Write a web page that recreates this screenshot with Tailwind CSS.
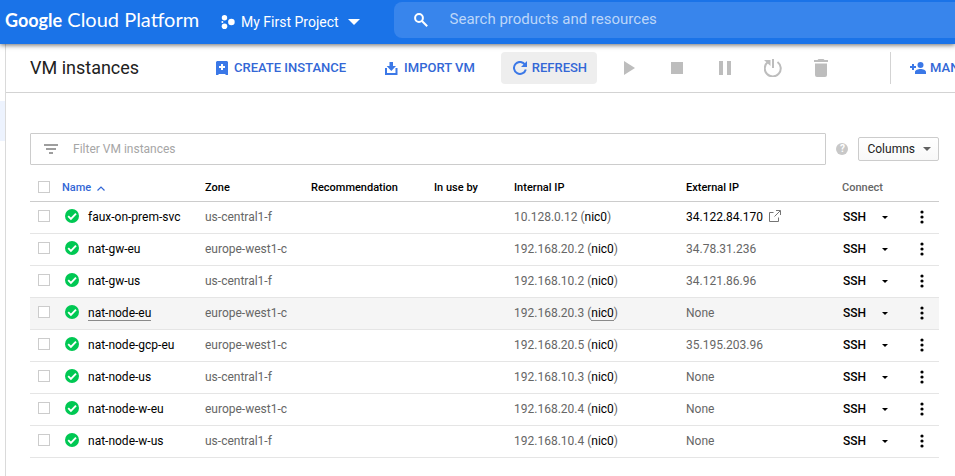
<!DOCTYPE html>
<html lang="en">
<head>
<meta charset="utf-8">
<meta name="viewport" content="width=device-width, initial-scale=1">
<title>VM instances</title>
<script src="https://cdn.jsdelivr.net/npm/@tailwindcss/browser@4"></script>
</head>
<body class="flex min-h-screen flex-col overflow-x-hidden bg-white font-[Roboto,sans-serif] text-xs text-[#212121]">

<svg class="hidden" aria-hidden="true">
  <symbol id="check" viewBox="0 0 14 14">
    <circle cx="7" cy="7" r="7" fill="#00c853"/>
    <path d="M3.2 7.2 5.9 9.900 11 4.600" fill="none" stroke="#fff" stroke-width="1.900"/>
  </symbol>
  <symbol id="dots" viewBox="0 0 4 14">
    <circle cx="2" cy="2" r="1.6"/><circle cx="2" cy="7" r="1.6"/><circle cx="2" cy="12" r="1.6"/>
  </symbol>
  <symbol id="external" viewBox="0 0 12 12">
    <path d="M4.500 2.500h-4v9h9v-4M7 .5h4.500v4.500M11.200.8 5.500 6.500" fill="none" stroke="#757575"/>
  </symbol>
</svg>

<header class="relative z-10 flex h-11 shrink-0 items-center bg-[#1a73e8] text-white shadow-[0_1px_5px_rgba(0,0,0,0.6)]">
  <a href="#" class="ml-[5px] w-48 shrink-0 whitespace-nowrap pb-1 font-[Lato,sans-serif] text-xl leading-6"><span class="text-lg font-bold">Google</span> Cloud Platform</a>
  <button class="ml-6 flex shrink-0 items-center whitespace-nowrap text-sm">
    <svg class="mr-[6px] size-[14px]" viewBox="0 0 14 14" fill="currentColor" aria-hidden="true"><circle cx="3.500" cy="2.700" r="2.700"/><circle cx="10.400" cy="7" r="3.300"/><circle cx="3.500" cy="11.200" r="2.800"/><circle cx="1.400" cy="7" r="1"/></svg>
    My First Project
    <svg class="ml-[9px] h-[6px] w-3" viewBox="0 0 12 6" fill="currentColor" aria-hidden="true"><path d="M0 0h12L6 6z"/></svg>
  </button>
  <label class="-mr-2 mb-1 ml-[34px] flex h-9 min-w-0 flex-1 items-center rounded-lg bg-[#3885ec]">
    <svg class="ml-5 size-[14px] shrink-0" viewBox="0 0 14 14" fill="none" stroke="currentColor" stroke-width="2" aria-hidden="true"><circle cx="5" cy="5" r="3.900"/><path d="m8 8 5.200 5.200"/></svg>
    <input type="search" aria-label="Search" placeholder="Search products and resources" class="ml-[22px] min-w-0 flex-1 bg-transparent text-[15px] outline-none placeholder:text-[#bcd6f9]">
  </label>
</header>

<div class="flex flex-1">
  <nav aria-label="Sections" class="w-[6px] shrink-0 border-r border-[#dadada] pt-[57px]"><div class="h-10 bg-[#edf3fe]"></div></nav>
  <main class="min-w-0 flex-1">
    <div class="flex h-[49px] items-center overflow-hidden whitespace-nowrap border-b border-[#d3d3d3] pl-6 text-[13px] font-medium text-[#3367d6]">
      <h1 class="w-[170px] shrink-0 text-lg font-normal text-[#212121]">VM instances</h1>
      <button class="ml-2 flex h-8 shrink-0 items-center gap-[6px] px-2">
        <svg class="h-[14px] w-3" viewBox="0 0 12 14" aria-hidden="true"><path d="M1 0h10l1 1v13h-2l-1-1H3l-1 1H0V1z" fill="#3b78e7"/><path d="M6 3v6M3 6h6" stroke="#fff" stroke-width="2"/></svg>
        CREATE INSTANCE
      </button>
      <button class="ml-[23px] flex h-8 shrink-0 items-center gap-[6px] px-2">
        <svg class="size-[13px]" viewBox="0 0 13 13" fill="#3b78e7" aria-hidden="true"><path d="M4.500 0h3.500v4h3l-4.700 5-4.600-5h2.800zM0 6h2v5h8.500V6H12.500v7H0z"/></svg>
        IMPORT VM
      </button>
      <button class="ml-[18px] flex h-8 shrink-0 items-center gap-[5px] rounded-sm bg-[#eee] pl-3 pr-[10px]">
        <svg class="size-[14px]" viewBox="0 0 14 14" aria-hidden="true"><path d="M12 3.600A6 6 0 1 0 12.800 8.500" fill="none" stroke="#3b78e7" stroke-width="2"/><path d="M14 0v6H8z" fill="#3b78e7"/></svg>
        REFRESH
      </button>
      <div class="ml-5 flex h-8 shrink-0 items-center gap-6 text-[#bdbdbd]">
        <button aria-label="Start" class="grid size-6 place-items-center"><svg class="h-[14px] w-[11px]" viewBox="0 0 11 14" fill="currentColor"><path d="M0 0v14l11-7z"/></svg></button>
        <button aria-label="Stop" class="grid size-6 place-items-center"><svg class="size-3" viewBox="0 0 12 12" fill="currentColor"><path d="M0 0h12v12H0z"/></svg></button>
        <button aria-label="Suspend" class="grid size-6 place-items-center"><svg class="h-[14px] w-3" viewBox="0 0 12 14" fill="currentColor"><path d="M0 0h4v14H0zM8 0h4v14H8z"/></svg></button>
        <button aria-label="Reset" class="grid size-6 place-items-center"><svg class="size-[18px]" viewBox="0 0 18 18"><path d="M3.600 3.300A8 8 0 1 0 13.500 3M9 0v9" fill="none" stroke="currentColor" stroke-width="2"/><path d="M0 1h6.500v6z" fill="currentColor"/></svg></button>
        <button aria-label="Delete" class="grid size-6 place-items-center"><svg class="h-[18px] w-[14px]" viewBox="0 0 14 18" fill="currentColor"><path d="M0 1h3.500l1-1h5l1 1H14v2H0zM1 4.500h12V16a2 2 0 0 1-2 2H3a2 2 0 0 1-2-2z"/></svg></button>
      </div>
      <button class="ml-[57px] flex h-8 shrink-0 items-center gap-1 border-l border-[#d3d3d3] pl-[19px]">
        <svg class="h-3 w-4" viewBox="0 0 16 12" fill="#3b78e7" aria-hidden="true"><circle cx="10.500" cy="3" r="3"/><path d="M5 12v-2c0-2 3-3 5.500-3s5.500 1 5.500 3v2zM2 2h2v2h2v2H4v2H2V6H0V4h2z"/></svg>
        MANAGE ACCESS
      </button>
    </div>

    <div class="px-6 pt-10 pr-4">
      <div class="flex items-center">
        <label class="flex h-8 min-w-0 flex-1 items-center rounded-[1px] border border-[#ccc]">
          <svg class="ml-[13px] h-[10px] w-[14px]" viewBox="0 0 14 10" fill="#9e9e9e" aria-hidden="true"><path d="M0 0h14v2H0zM2 4h10v2H2zM5 8h4v2H5z"/></svg>
          <input type="text" aria-label="Filter VM instances" placeholder="Filter VM instances" class="ml-[15px] min-w-0 flex-1 bg-transparent outline-none placeholder:text-[#a6a6a6]">
        </label>
        <button aria-label="Help" class="ml-[10px] grid size-3 place-items-center rounded-full bg-[#c8c8c8] text-[10px] font-bold leading-3 text-white">?</button>
        <button class="ml-[10px] flex h-6 items-center gap-2 rounded-xs border border-[#ccc] bg-linear-to-b from-white to-[#f8f8f8] pl-2 pr-[7px]">
          Columns
          <svg class="h-1 w-2" viewBox="0 0 8 4" fill="#616161" aria-hidden="true"><path d="M0 0h8L4 4z"/></svg>
        </button>
      </div>

      <table class="mt-2 w-full table-fixed border-collapse text-left">
        <colgroup>
          <col class="w-8"><col class="w-[143px]"><col class="w-[106px]"><col class="w-[123px]"><col class="w-20"><col class="w-[172px]"><col class="w-[156px]"><col><col class="w-[34px]">
        </colgroup>
        <thead>
          <tr class="h-7 border-b border-[#ccc] text-[11px] text-black">
            <th class="pl-2"><input type="checkbox" aria-label="Select all" class="block size-3 appearance-none border border-[#ccc] bg-white"></th>
            <th class="pt-1 font-medium text-[#3367d6]"><button class="flex items-center gap-[6px]">Name <svg class="h-[5px] w-2" viewBox="0 0 8 5" fill="none" stroke="currentColor" stroke-width="1.200" aria-hidden="true"><path d="M.5 4.500 4 1l3.500 3.500"/></svg></button></th>
            <th class="pt-1 font-medium">Zone</th>
            <th class="pt-1 font-medium">Recommendation</th>
            <th class="pt-1 font-medium">In use by</th>
            <th class="pt-1 font-medium">Internal IP</th>
            <th class="pt-1 font-medium">External IP</th>
            <th class="pt-1 font-medium text-[#666]">Connect</th>
            <th></th>
          </tr>
        </thead>
        <tbody id="rows" class="text-[#666]"></tbody>
      </table>
    </div>
  </main>
</div>

<script>
const vms = [
  ["faux-on-prem-svc", "us-central1-f", "10.128.0.12", "34.122.84.170", "link"],
  ["nat-gw-eu", "europe-west1-c", "192.168.20.2", "34.78.31.236"],
  ["nat-gw-us", "us-central1-f", "192.168.10.2", "34.121.86.96"],
  ["nat-node-eu", "europe-west1-c", "192.168.20.3", "None", "hover"],
  ["nat-node-gcp-eu", "europe-west1-c", "192.168.20.5", "35.195.203.96"],
  ["nat-node-us", "us-central1-f", "192.168.10.3", "None"],
  ["nat-node-w-eu", "europe-west1-c", "192.168.20.4", "None"],
  ["nat-node-w-us", "us-central1-f", "192.168.10.4", "None"],
];
document.getElementById("rows").innerHTML = vms.map(([name, zone, internal, external, state]) => `
  <tr class="h-8 border-b border-[#e5e5e5] ${state === "hover" ? "bg-[#f5f5f5]" : ""}">
    <td class="pl-2"><input type="checkbox" aria-label="Select ${name}" class="mb-[2px] block size-3 appearance-none border border-[#ccc] bg-white"></td>
    <td><div class="flex items-center gap-[9px] pl-[3px]"><svg class="mb-[2px] size-[14px]" role="img" aria-label="Running"><use href="#check"/></svg><a href="#" class="border-b leading-[14px] text-black ${state === "hover" ? "border-[#8a8a8a]" : "border-transparent"}">${name}</a></div></td>
    <td>${zone}</td>
    <td></td>
    <td></td>
    <td>${internal} (<a href="#" class="border-b text-black ${state === "hover" ? "border-[#8a8a8a]" : "border-transparent"}">nic0</a>)</td>
    <td>${state === "link" ? `<a href="#" class="flex items-center gap-[6px] text-black">${external}<svg class="mb-[2px] size-3" aria-hidden="true"><use href="#external"/></svg></a>` : external}</td>
    <td><div class="flex items-center gap-3 pl-px text-black"><button class="font-medium">SSH</button><button aria-label="SSH options" class="px-1"><svg class="h-[3px] w-[6px]" viewBox="0 0 6 3" fill="currentColor"><path d="M0 0h6L3 3z"/></svg></button></div></td>
    <td><button aria-label="More actions" class="ml-[15px] block text-black"><svg class="h-[14px] w-1" fill="currentColor"><use href="#dots"/></svg></button></td>
  </tr>`).join("");
</script>
</body>
</html>
